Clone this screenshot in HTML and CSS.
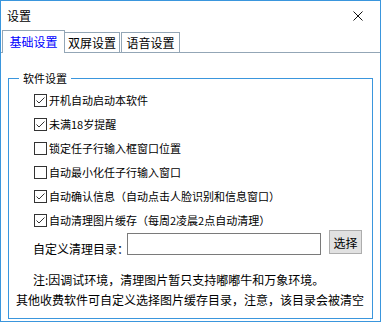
FILE: index.html
```html
<!DOCTYPE html>
<html lang="zh-CN">
<head>
    <meta charset="UTF-8">
    <title>设置</title>
    <link rel="stylesheet" href="styles.css">
</head>
<body>
    <div class="window">
        <div class="titlebar">
            <span class="title">设置</span>
            <svg class="close" width="10" height="10" viewBox="0 0 10 10">
                <path d="M0.5 0.5 L9.5 9.5 M9.5 0.5 L0.5 9.5" stroke="#111" stroke-width="1" fill="none"/>
            </svg>
        </div>
        <div class="tabs">
            <div class="tab tab-active tab-basic">基础设置</div>
            <div class="tab tab-dual">双屏设置</div>
            <div class="tab tab-voice">语音设置</div>
        </div>
        <div class="panel">
            <fieldset class="group">
                <legend>软件设置</legend>
                <div class="check-row"><span class="box checked"></span>开机自动启动本软件</div>
                <div class="check-row"><span class="box checked"></span>未满18岁提醒</div>
                <div class="check-row"><span class="box"></span>锁定任子行输入框窗口位置</div>
                <div class="check-row"><span class="box"></span>自动最小化任子行输入窗口</div>
                <div class="check-row"><span class="box checked"></span>自动确认信息（自动点击人脸识别和信息窗口）</div>
                <div class="check-row"><span class="box checked"></span>自动清理图片缓存（每周2凌晨2点自动清理）</div>
                <div class="dir-row">
                    <span class="dir-label">自定义清理目录：</span>
                    <input class="dir-input" type="text">
                    <button class="dir-button">选择</button>
                </div>
                <div class="note note-first">注:因调试环境，清理图片暂只支持嘟嘟牛和万象环境。</div>
                <div class="note note-second">其他收费软件可自定义选择图片缓存目录，注意，该目录会被清空</div>
            </fieldset>
        </div>
    </div>
</body>
</html>
```

FILE: styles.css
```css
html, body {
    margin: 0;
    padding: 0;
    background: #fff;
}
body {
    font-family: "Noto Sans CJK SC", "Microsoft YaHei", sans-serif;
    font-size: 12px;
    color: #000;
}
.window {
    width: 381px;
    height: 322px;
    box-sizing: border-box;
    border: 1px solid #3a96dd;
    background: #fff;
    overflow: hidden;
}
.titlebar {
    height: 29px;
    display: flex;
    align-items: center;
    justify-content: space-between;
    padding: 0 17px 0 6px;
}
.title {
    line-height: 16px;
    margin-top: 1px;
}
.close {
    display: block;
    margin-top: 1px;
}
.tabs {
    height: 23px;
    display: flex;
    align-items: flex-end;
    box-shadow: inset 0 -1px 0 #93a6b6;
}
.tab {
    box-sizing: border-box;
    height: 20px;
    margin-bottom: 1px;
    border: 1px solid #93a6b6;
    border-bottom: none;
    background: #fff;
    text-align: center;
    line-height: 20px;
}
.tab-active {
    height: 23px;
    margin-bottom: 0;
    color: #0000ff;
    line-height: 21px;
    position: relative;
    z-index: 1;
}
.tab-basic {
    width: 63px;
    margin-left: 1px;
}
.tab-dual {
    width: 56px;
    margin-left: -1px;
}
.tab-voice {
    width: 59px;
    margin-left: 1px;
}
.panel {
    padding: 17px 7px 0 7px;
}
.group {
    margin: 0;
    padding: 2px 0 0 0;
    height: 249px;
    box-sizing: border-box;
    border: 1px solid #3a96dd;
    min-width: 0;
}
.group legend {
    font-size: 11px;
    line-height: 16px;
    margin-left: 10px;
    padding: 0 4px;
}
.check-row {
    height: 24px;
    display: flex;
    align-items: center;
    padding-left: 25px;
    font-size: 11px;
    white-space: nowrap;
}
.box {
    width: 13px;
    height: 13px;
    box-sizing: border-box;
    border: 1px solid #333;
    background: #fff;
    margin-right: 2px;
    flex: none;
}
.box.checked {
    background-image: url("data:image/svg+xml;utf8,<svg xmlns='http://www.w3.org/2000/svg' width='11' height='11' viewBox='0 0 11 11'><path d='M1.5 5.5 L4 8 L9.5 2.5' stroke='%23333' stroke-width='1' fill='none'/></svg>");
    background-repeat: no-repeat;
}
.dir-row {
    height: 25px;
    margin-top: -2px;
    display: flex;
    align-items: flex-start;
    padding-left: 24px;
}
.dir-label {
    width: 94px;
    min-width: 0;
    flex: none;
    line-height: 16px;
    margin-top: 11px;
    white-space: nowrap;
}
.dir-input {
    box-sizing: border-box;
    flex: none;
    width: 194px;
    height: 22px;
    margin: 3px 0 0 0;
    border: 1px solid #7a7a7a;
    padding: 0;
    background: #fff;
}
.dir-button {
    box-sizing: border-box;
    flex: none;
    width: 33px;
    height: 24px;
    margin-left: 8px;
    padding: 0;
    border: 1px solid #adadad;
    background: #e1e1e1;
    font-family: inherit;
    font-size: 12px;
    color: #000;
}
.note {
    line-height: 20px;
    white-space: nowrap;
}
.note-first {
    margin-top: 15px;
    padding-left: 24px;
}
.note-second {
    padding-left: 7px;
}
```
